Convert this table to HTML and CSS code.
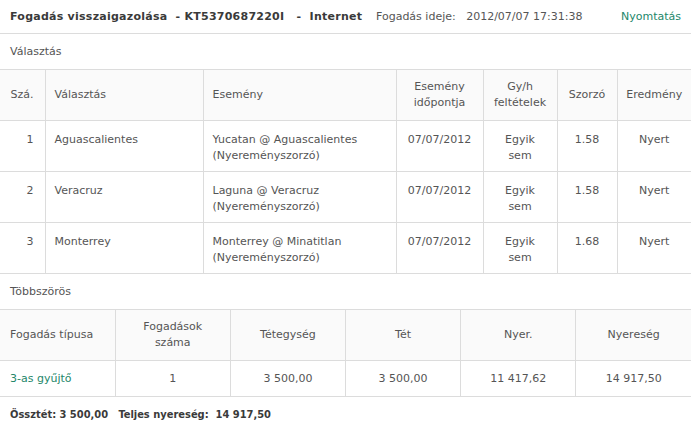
FILE: index.html
```html
<!DOCTYPE html>
<html lang="hu">
<head>
<meta charset="utf-8">
<title>Fogadás visszaigazolása</title>
<link rel="stylesheet" href="styles.css">
</head>
<body>
<div class="page">
  <header class="topbar">
    <span class="title">Fogadás visszaigazolása&nbsp; - KT5370687220I&nbsp;&nbsp; -&nbsp; Internet</span>
    <span class="meta">Fogadás ideje:&nbsp;&nbsp; 2012/07/07 17:31:38</span>
    <a class="print" href="#">Nyomtatás</a>
  </header>

  <div class="section-label">Választás</div>
  <table class="grid sel">
    <colgroup>
      <col class="c-no"><col class="c-pick"><col class="c-event"><col class="c-date"><col class="c-cond"><col class="c-odds"><col class="c-res">
    </colgroup>
    <thead>
      <tr>
        <th class="num">Szá.</th>
        <th class="left">Választás</th>
        <th class="left">Esemény</th>
        <th>Esemény<br>időpontja</th>
        <th>Gy/h<br>feltételek</th>
        <th>Szorzó</th>
        <th>Eredmény</th>
      </tr>
    </thead>
    <tbody>
      <tr>
        <td class="num">1</td>
        <td class="left">Aguascalientes</td>
        <td class="left">Yucatan @ Aguascalientes<br>(Nyereményszorzó)</td>
        <td>07/07/2012</td>
        <td>Egyik<br>sem</td>
        <td>1.58</td>
        <td>Nyert</td>
      </tr>
      <tr>
        <td class="num">2</td>
        <td class="left">Veracruz</td>
        <td class="left">Laguna @ Veracruz<br>(Nyereményszorzó)</td>
        <td>07/07/2012</td>
        <td>Egyik<br>sem</td>
        <td>1.58</td>
        <td>Nyert</td>
      </tr>
      <tr>
        <td class="num">3</td>
        <td class="left">Monterrey</td>
        <td class="left">Monterrey @ Minatitlan<br>(Nyereményszorzó)</td>
        <td>07/07/2012</td>
        <td>Egyik<br>sem</td>
        <td>1.68</td>
        <td>Nyert</td>
      </tr>
    </tbody>
  </table>

  <div class="section-label">Többszörös</div>
  <table class="grid multi">
    <thead>
      <tr>
        <th class="left first">Fogadás típusa</th>
        <th>Fogadások<br>száma</th>
        <th>Tétegység</th>
        <th>Tét</th>
        <th>Nyer.</th>
        <th>Nyereség</th>
      </tr>
    </thead>
    <tbody>
      <tr>
        <td class="left first link">3-as gyűjtő</td>
        <td>1</td>
        <td>3 500,00</td>
        <td>3 500,00</td>
        <td>11 417,62</td>
        <td>14 917,50</td>
      </tr>
    </tbody>
  </table>

  <div class="total">Össztét: 3 500,00&nbsp;&nbsp; Teljes nyereség:&nbsp; 14 917,50</div>
</div>
</body>
</html>
```

FILE: styles.css
```css
html, body {
  margin: 0;
  padding: 0;
  background: #ffffff;
}

body {
  font-family: "DejaVu Sans", Verdana, sans-serif;
  font-size: 11px;
  color: #555555;
}

.page {
  width: 691px;
}

.topbar {
  display: flex;
  align-items: center;
  height: 33px;
  padding: 0 10px;
  border-bottom: 1px solid #dcdcdc;
  box-sizing: content-box;
}

.title {
  flex: none;
  width: 366px;
  white-space: nowrap;
  font-weight: bold;
  letter-spacing: 0.25px;
  color: #3a3a3a;
}

.meta {
  flex: none;
  color: #555555;
  white-space: nowrap;
}

.print {
  margin-left: auto;
  color: #24876a;
  text-decoration: none;
}

.section-label {
  height: 35px;
  line-height: 35px;
  padding-left: 10px;
  color: #555555;
}

.grid {
  width: 691px;
  border-collapse: collapse;
  table-layout: fixed;
}

.grid th,
.grid td {
  border: 1px solid #dcdcdc;
  text-align: center;
  line-height: 16px;
  padding: 0 8px;
  font-weight: normal;
  color: #555555;
}

.grid th:first-child,
.grid td:first-child {
  border-left: none;
}

.grid th:last-child,
.grid td:last-child {
  border-right: none;
}

.grid th {
  background: #fafafa;
  height: 32px;
  padding-top: 9px;
  padding-bottom: 9px;
  vertical-align: middle;
}

.sel td {
  vertical-align: top;
  height: 32px;
  padding-top: 11px;
  padding-bottom: 7px;
}

.grid .left {
  text-align: left;
  padding-left: 9px;
}

.grid .num {
  text-align: right;
  padding-right: 11px;
}

.c-no { width: 45px; }
.c-pick { width: 158px; }
.c-event { width: 193px; }
.c-date { width: 87px; }
.c-cond { width: 74px; }
.c-odds { width: 60px; }
.c-res { width: 74px; }

.multi td {
  height: 16px;
  padding-top: 10px;
  padding-bottom: 9px;
  vertical-align: middle;
}

.grid .first {
  padding-left: 10px;
}

.grid td.link {
  color: #24876a;
}

.total {
  height: 35px;
  line-height: 35px;
  padding-left: 10px;
  font-family: "DejaVu Sans Condensed", "DejaVu Sans", sans-serif;
  font-stretch: condensed;
  font-weight: bold;
  color: #3a3a3a;
}
```
